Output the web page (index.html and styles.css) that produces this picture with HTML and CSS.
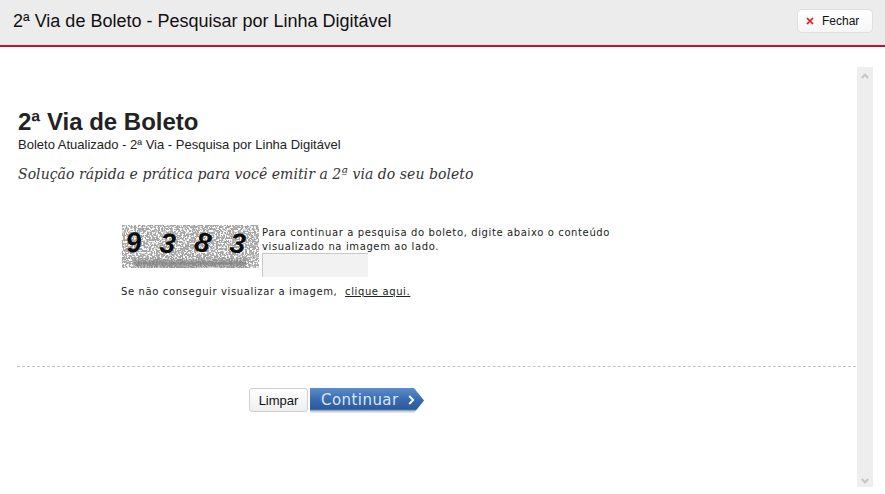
FILE: index.html
```html
<!DOCTYPE html>
<html lang="pt-BR">
<head>
<meta charset="utf-8">
<title>2ª Via de Boleto</title>
<link rel="stylesheet" href="styles.css">
</head>
<body>
<header class="topbar">
  <h1 class="topbar-title">2ª Via de Boleto - Pesquisar por Linha Digitável</h1>
  <button class="close-btn" type="button">
    <svg class="close-icon" viewBox="0 0 8 8" width="8" height="8"><path d="M1 1l6 6M7 1l-6 6" stroke="#e8141c" stroke-width="1.7" fill="none"/></svg>
    <span>Fechar</span>
  </button>
</header>
<div class="frame">
  <main class="content">
    <div class="heading">
      <h2 class="title">2ª Via de Boleto</h2>
      <p class="subtitle">Boleto Atualizado - 2ª Via - Pesquisa por Linha Digitável</p>
      <p class="slogan">Solução rápida e prática para você emitir a 2ª via do seu boleto</p>
    </div>
    <section class="captcha">
      <div class="captcha-row">
        <svg class="captcha-img" viewBox="0 0 137 43" width="137" height="43">
          <defs>
            <filter id="noise" x="0" y="0" width="100%" height="100%">
              <feTurbulence type="fractalNoise" baseFrequency="0.5" numOctaves="2" seed="7"/>
              <feColorMatrix type="matrix" values="0 0 0 0 0.36 0 0 0 0 0.36 0 0 0 0 0.36 4 4 0 0 -3.9"/>
              <feComposite in2="SourceGraphic" operator="over"/>
            </filter>
            <filter id="speck" x="0" y="0" width="100%" height="100%">
              <feTurbulence type="fractalNoise" baseFrequency="0.55" numOctaves="2" seed="3"/>
              <feColorMatrix type="matrix" values="0 0 0 0 1 0 0 0 0 1 0 0 0 0 1 5 0 5 0 -4.8"/>
            </filter>
            <linearGradient id="band" x1="0" y1="0" x2="0" y2="1">
              <stop offset="0" stop-color="#7d7d7d" stop-opacity="0"/>
              <stop offset="0.55" stop-color="#7d7d7d" stop-opacity="0.85"/>
              <stop offset="1" stop-color="#7d7d7d" stop-opacity="0.3"/>
            </linearGradient>
          </defs>
          <rect width="137" height="43" fill="#a6a6a6" filter="url(#noise)"/>
          <rect width="137" height="43" filter="url(#speck)"/>
          <rect x="12" y="32" width="112" height="11" fill="url(#band)"/>
          <g class="captcha-digits">
            <text x="4" y="27" transform="rotate(-8 12 18)">9</text>
            <text x="38" y="28" transform="rotate(6 47 18)">3</text>
            <text x="73" y="27" transform="rotate(14 81 18)">8</text>
            <text x="108" y="28" transform="rotate(6 117 18)">3</text>
          </g>
        </svg>
        <div class="captcha-side">
          <p class="small captcha-text">Para continuar a pesquisa do boleto, digite abaixo o conteúdo visualizado na imagem ao lado.</p>
          <input class="captcha-input" type="text" aria-label="Código da imagem">
        </div>
      </div>
      <p class="small captcha-help">Se não conseguir visualizar a imagem, &nbsp;<a class="help-link" href="#">clique aqui.</a></p>
    </section>
    <div class="actions">
      <button class="clear-btn" type="button">Limpar</button>
      <button class="continue-btn" type="button">
        <span class="continue-label">Continuar</span>
        <svg class="continue-icon" viewBox="0 0 7 10" width="7" height="10"><path d="M1.2 1l4 4-4 4" stroke="#fff" stroke-width="1.8" fill="none"/></svg>
      </button>
    </div>
  </main>
  <aside class="scrollbar">
    <svg viewBox="0 0 8 6" width="8" height="6"><path d="M0.8 5L4 1.6 7.2 5" stroke="#c4c4c4" stroke-width="2" fill="none"/></svg>
    <svg viewBox="0 0 8 6" width="8" height="6"><path d="M0.8 1L4 4.4 7.2 1" stroke="#c4c4c4" stroke-width="2" fill="none"/></svg>
  </aside>
</div>
</body>
</html>
```
FILE: styles.css
```css
* { box-sizing: border-box; }
html, body { margin: 0; padding: 0; }
body {
  width: 885px;
  height: 494px;
  overflow: hidden;
  background: #fff;
  font-family: "Liberation Sans", Arial, sans-serif;
  color: #222;
}
.topbar {
  height: 47px;
  background: #ececec;
  border-bottom: 2px solid #c8102e;
  display: flex;
  align-items: flex-start;
  justify-content: space-between;
  padding: 9px 12px 0 13px;
}
.topbar-title {
  margin: 2px 0 0;
  font-size: 18px;
  line-height: 20px;
  font-weight: 400;
  color: #111;
}
.close-btn {
  width: 76px;
  height: 24px;
  display: flex;
  align-items: center;
  gap: 8px;
  padding: 0 0 0 8px;
  background: linear-gradient(#ffffff, #f6f6f6);
  border: 1px solid #dfdfdf;
  border-radius: 5px;
  font: 12px "Liberation Sans", Arial, sans-serif;
  color: #111;
}
.close-icon { flex: none; }
.frame {
  display: flex;
  align-items: flex-start;
  gap: 1px;
  padding: 20px 12px 0 17px;
}
.content { width: 839px; flex: none; }
.heading { padding-left: 1px; }
.title {
  margin: 41px 0 0;
  font-size: 24px;
  line-height: 28px;
  font-weight: 700;
  color: #222;
}
.subtitle {
  margin: 1px 0 0;
  font-size: 13px;
  line-height: 15px;
  color: #222;
}
.slogan {
  margin: 12px 0 0;
  font: italic 14px/20px "DejaVu Serif", Georgia, serif;
  letter-spacing: 0.05px;
  color: #333;
}
.captcha {
  margin-top: 41px;
  padding-left: 104px;
  height: 142px;
  border-bottom: 1px dashed #c4c4c4;
}
.captcha-row { display: flex; align-items: flex-start; gap: 3px; }
.captcha-img { flex: none; display: block; margin-left: 1px; }
.captcha-digits text {
  font: italic 700 28px "Liberation Sans", sans-serif;
  fill: #0d0d0d;
}
.small {
  margin: 0;
  font: 10px/14px "DejaVu Sans", Verdana, sans-serif;
  letter-spacing: 0.62px;
  color: #222;
}
.captcha-side { width: 356px; }
.captcha-text { padding-top: 1px; }
.captcha-input {
  display: block;
  width: 106px;
  height: 24px;
  margin-top: -1px;
  padding: 0;
  background: #f2f2f2;
  border: 0;
  border-top: 1px solid #c8c8c8;
  border-left: 1px solid #c8c8c8;
  outline: 0;
}
.captcha-help { margin-top: 8px; }
.help-link { color: #222; text-decoration: underline; }
.actions {
  display: flex;
  align-items: flex-start;
  gap: 2px;
  margin-top: 21px;
  padding-left: 232px;
}
.clear-btn {
  width: 59px;
  height: 24px;
  padding: 0;
  background: linear-gradient(#ffffff, #eeeeee);
  border: 1px solid #cfcfcf;
  border-radius: 3px;
  font: 13px "Liberation Sans", Arial, sans-serif;
  color: #111;
}
.continue-btn {
  width: 114px;
  height: 25px;
  display: flex;
  align-items: center;
  padding: 0 0 2px 11px;
  border: 0;
  background: linear-gradient(#5c8ccb, #3a6cb0 45%, #2c5a9c 85%, #bfc7d2 92%, #eef0f3);
  clip-path: polygon(0 0, 104px 0, 100% 50%, 104px 100%, 0 100%);
  color: #dbe6f5;
  font: 15px "DejaVu Sans", Verdana, sans-serif;
  letter-spacing: 0.45px;
}
.continue-icon { margin-left: 9px; flex: none; }
.scrollbar {
  width: 16px;
  height: 420px;
  flex: none;
  background: #eeeeee;
  display: flex;
  flex-direction: column;
  align-items: center;
  justify-content: space-between;
  padding: 6px 0 3px;
}
```
